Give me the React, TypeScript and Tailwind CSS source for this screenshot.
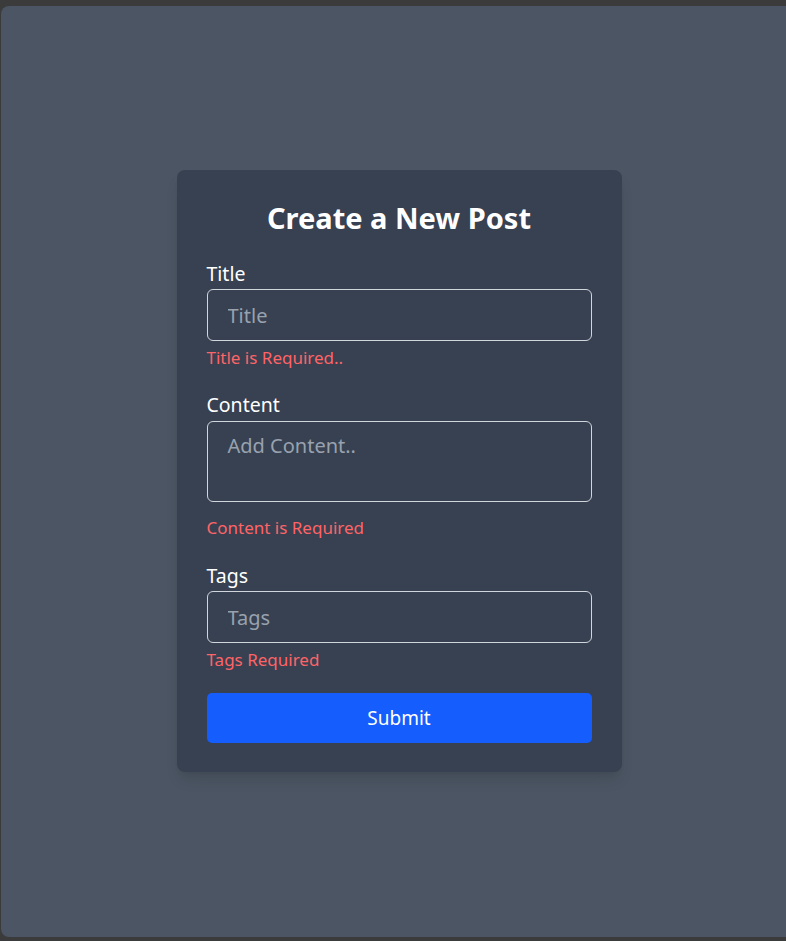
import React from "react";

export default function App() {
  const font = { fontFamily: '"Noto Sans", "Open Sans", sans-serif' };
  return (
    <div className="w-[786px] h-[941px] overflow-hidden bg-[#3b3b3b] pt-[6px] pl-[1px] pb-[4px]" style={font}>
      <div className="w-[796px] h-[931px] bg-[#4b5563] rounded-l-[8px] flex items-start justify-center pt-[164px]">
        <div className="w-[445px] bg-[#374151] rounded-lg shadow-lg px-[30px] pt-[30px] pb-[29px]">
          <h2 className="text-[29px] leading-[36px] font-bold text-white text-center mb-[24px]">Create a New Post</h2>
          <div className="mb-[21px]">
            <label className="block text-[19.5px] leading-7 text-white mb-[1px]">Title</label>
            <input
              placeholder="Title"
              className="block w-full h-[52px] rounded-md border border-[#d1d5dc] bg-transparent px-5 text-[20px] text-white placeholder:text-[#99a1af] outline-none"
            />
            <p className="mt-[5px] text-[17px] leading-6 text-[#ff6467]">Title is Required..</p>
          </div>
          <div className="mb-[22px]">
            <label className="block text-[19.5px] leading-7 text-white mb-[2px]">Content</label>
            <textarea
              placeholder="Add Content.."
              className="block w-full h-[81px] rounded-md border border-[#d1d5dc] bg-transparent px-5 pt-[10px] pb-3 text-[20px] leading-7 text-white placeholder:text-[#99a1af] outline-none resize-none"
            />
            <p className="mt-[14px] text-[17px] leading-6 text-[#ff6467]">Content is Required</p>
          </div>
          <div className="mb-[21px]">
            <label className="block text-[19.5px] leading-7 text-white mb-[1px]">Tags</label>
            <input
              placeholder="Tags"
              className="block w-full h-[52px] rounded-md border border-[#d1d5dc] bg-transparent px-5 text-[20px] text-white placeholder:text-[#99a1af] outline-none"
            />
            <p className="mt-[5px] text-[17px] leading-6 text-[#ff6467]">Tags Required</p>
          </div>
          <button className="block w-full h-[50px] rounded-[5px] bg-[#155dfc] text-[19px] text-white">Submit</button>
        </div>
      </div>
    </div>
  );
}
